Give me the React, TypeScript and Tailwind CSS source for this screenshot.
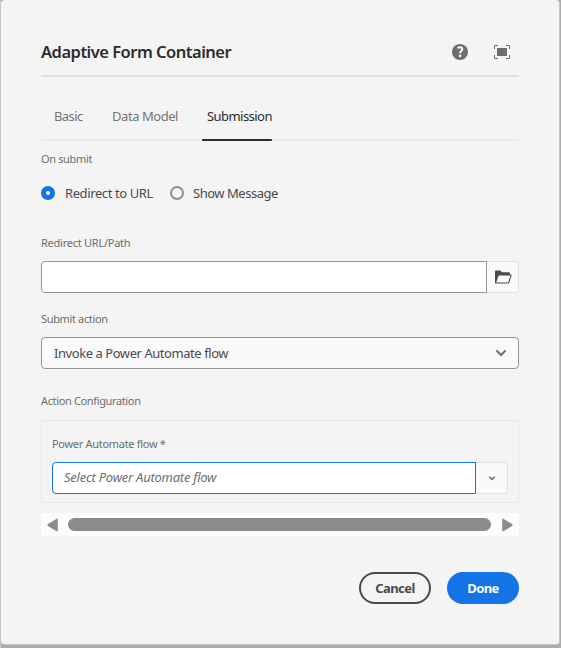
import React from "react";

function Label({ children, className = "" }: { children: React.ReactNode; className?: string }) {
  return <div className={`h-4 whitespace-nowrap text-[11px] leading-4 text-[#6e6e6e] ${className}`}>{children}</div>;
}

function HelpIcon() {
  return (
    <svg width="16" height="16" viewBox="0 0 16 16">
      <circle cx="8" cy="8" r="8" fill="#6e6e6e" />
      <path d="M5.5 4.3C6.2 3.6 7.1 3.3 8 3.3c1.5 0 2.3.8 2.3 1.9 0 1.9-2.2 1.9-2.2 4.1" fill="none" stroke="#f5f5f5" strokeWidth="2.1" />
      <circle cx="8" cy="11.9" r="1.3" fill="#f5f5f5" />
    </svg>
  );
}

function FullScreenIcon() {
  return (
    <svg width="16" height="14" viewBox="0 0 16 14">
      <path d="M3 3h10v8H3z" fill="#6e6e6e" />
      <path d="M.5 4V.5H4M12 .5h3.5V4M15.5 10v3.5H12M4 13.5H.5V10" fill="none" stroke="#6e6e6e" />
    </svg>
  );
}

function FolderIcon() {
  return (
    <svg width="18" height="14" viewBox="0 0 18 14">
      <path d="M1 13V1.2Q1 .5 1.7.5h4.6l1.7 1.7h7.1q.8 0 .8.8v1.4h1.2q.8 0 .6.7L15.3 12.7q-.2.8-1 .8H1.5z" fill="#4b4b4b" />
      <path d="M4.6 5.4h11.9l-2.3 7.1H2.2z" fill="#fafafa" />
    </svg>
  );
}

export default function App() {
  return (
    <div className="flex h-[648px] w-[561px] items-start bg-[#acacac] pl-px font-['Noto_Sans',sans-serif] [box-shadow:inset_1px_0_#c8c8c8]">
      <div className="h-[645px] w-[559px] rounded-[4px] border-r border-b border-[#c8c8c8] bg-[#f4f4f4] pl-10">
        <div className="w-[478px]">
          <header className="flex h-[77px] items-center border-b-2 border-[#e1e1e1] pt-[29px]">
            <h1 className="flex-1 whitespace-nowrap text-[16.5px] font-semibold leading-6 tracking-[-0.5px] text-[#2c2c2c]">Adaptive Form Container</h1>
            <HelpIcon />
            <span className="mr-[9px] ml-[26px]"><FullScreenIcon /></span>
          </header>

          <nav className="flex h-16 items-end border-b-2 border-[#eaeaea] pl-[13px] text-[13px] text-[#747474]">
            <span className="h-[33px] w-[58px] whitespace-nowrap leading-5 tracking-[-0.6px]">Basic</span>
            <span className="h-[33px] w-[90px] whitespace-nowrap leading-5 tracking-[-0.45px]">Data Model</span>
            <span className="-mb-[2px] h-[35px] w-[70px] whitespace-nowrap rounded-b-[1px] border-b-2 border-[#2c2c2c] pl-[5px] leading-5 tracking-[-0.55px] text-[#2c2c2c]">Submission</span>
          </nav>

          <Label className="mt-[10px] tracking-[-0.35px]">On submit</Label>
          <div className="mt-[16px] flex h-5 items-center text-[13px] leading-5 text-[#4b4b4b]">
            <span className="size-[14px] shrink-0 rounded-full border-[5px] border-[#1473e6] bg-white" />
            <span className="ml-[10px] w-[105px] whitespace-nowrap tracking-[-0.4px]">Redirect to URL</span>
            <span className="size-[14px] shrink-0 rounded-full border-2 border-[#8e8e8e] bg-[#fafafa]" />
            <span className="ml-[9px] whitespace-nowrap tracking-[-0.48px]">Show Message</span>
          </div>

          <Label className="mt-8 tracking-[-0.25px]">Redirect URL/Path</Label>
          <div className="mt-[10px] flex h-8">
            <div className="w-[446px] rounded-l-[4px] border border-[#959595] bg-white" />
            <div className="flex w-8 items-center justify-center rounded-r-[4px] border border-l-0 border-[#e1e1e1] bg-[#fafafa] pl-px"><FolderIcon /></div>
          </div>

          <Label className="mt-[18px] tracking-[-0.35px]">Submit action</Label>
          <div className="mt-[10px] flex h-8 items-center justify-between rounded-[4px] border border-[#959595] bg-[#fafafa] pr-3 pl-3 text-[#4b4b4b]">
            <span className="whitespace-nowrap text-[13px] leading-5 tracking-[-0.44px]">Invoke a Power Automate flow</span>
            <svg width="10" height="8" viewBox="0 0 10 8"><path d="M1 2l4 4 4-4" fill="none" stroke="#6e6e6e" strokeWidth="2" strokeLinecap="round" /></svg>
          </div>

          <Label className="mt-6 tracking-[-0.36px]">Action Configuration</Label>
          <section className="mt-[11px] h-[83px] border border-[#e8e8e8] px-[10px] pt-[15px]">
            <Label className="tracking-[-0.3px]">Power Automate flow *</Label>
            <div className="mt-[10px] flex h-8">
              <div className="flex w-[424px] items-center rounded-l-[4px] border border-[#1473e6] bg-white pl-[11px] text-[13px] italic tracking-[-0.25px] text-[#6e6e6e]">Select Power Automate flow</div>
              <div className="flex w-8 items-center justify-center rounded-r-[4px] border border-l-0 border-[#e1e1e1] bg-[#fafafa]">
                <svg width="6" height="5" viewBox="0 0 6 5"><path d="M.6 1L3 3.4 5.4 1" fill="none" stroke="#6e6e6e" strokeWidth="1.5" strokeLinecap="round" /></svg>
              </div>
            </div>
          </section>

          <div className="mt-[10px] flex h-[23px] items-center bg-[#fcfcfc] pl-[6px]">
            <svg width="11" height="14" viewBox="0 0 11 14"><path d="M10.2 1v12L1 7.6Q.4 7 1 6.4z" fill="#8b8b8b" stroke="#8b8b8b" strokeLinejoin="round" /></svg>
            <div className="ml-[10px] h-[13px] w-[423px] rounded-full bg-[#8b8b8b]" />
            <svg className="ml-[11px]" width="11" height="14" viewBox="0 0 11 14"><path d="M.8 1v12L10 7.6q.6-.6 0-1.2z" fill="#8b8b8b" stroke="#8b8b8b" strokeLinejoin="round" /></svg>
          </div>

          <footer className="mt-9 flex h-8 justify-end gap-4 text-[13px] font-bold">
            <button className="w-[72px] rounded-full border-2 border-[#4b4b4b] pt-0.5 tracking-[-0.6px] text-[#4b4b4b]">Cancel</button>
            <button className="w-[72px] rounded-full bg-[#1473e6] pt-0.5 tracking-[-0.6px] text-white">Done</button>
          </footer>
        </div>
      </div>
    </div>
  );
}
